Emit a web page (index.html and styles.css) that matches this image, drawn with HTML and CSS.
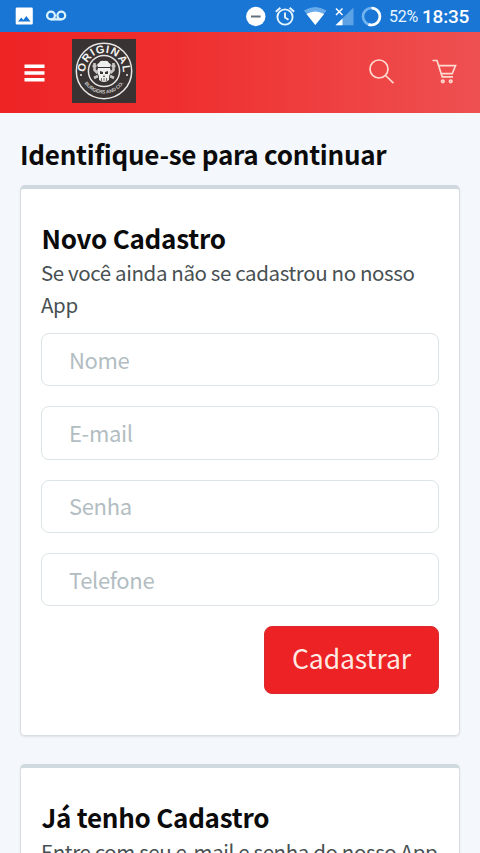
FILE: index.html
```html
<!DOCTYPE html>
<html lang="pt-BR">
<head>
<meta charset="utf-8">
<meta name="viewport" content="width=device-width, initial-scale=1">
<title>Cadastro</title>
<link rel="stylesheet" href="styles.css">
</head>
<body>
<div class="status">
  <svg class="status-left" width="70" height="32" viewBox="0 0 70 32">
    <path fill="#fff" fill-rule="evenodd" d="M17 7.500h14.500q1.300 0 1.300 1.300v14.400q0 1.300-1.300 1.300H17q-1.300 0-1.300-1.300V8.800q0-1.300 1.300-1.300zM18 21.500h12.500l-4.200-5.500-3 3.900-2-2.400z"/>
    <g fill="none" stroke="#d9f3ff" stroke-width="2.300"><circle cx="51" cy="15.500" r="3.900"/><circle cx="61.300" cy="15.500" r="3.900"/><path d="M51 19.400h10.300"/></g>
  </svg>
  <div class="status-right">
    <svg width="140" height="32" viewBox="244 0 140 32">
      <circle cx="255.800" cy="16.500" r="9.700" fill="#fff"/><path d="M251 16.500h9.600" stroke="#60717c" stroke-width="2"/>
      <g fill="none" stroke="#e6f5ff" stroke-width="1.900"><circle cx="285" cy="17" r="7.600"/><path d="M285 12.500v5l3.500 2.300M275.800 11.800l4.600-4M294.200 11.800l-4.600-4"/></g>
      <path d="M304 10.500q11-7 22.500 0L315.300 25z" fill="#68abea"/><path d="M306.500 14q8.800-5 17.600 0L315.300 25z" fill="#fff"/>
      <path d="M353.500 7.500V25.300H335.500z" fill="#5ca2e5"/><path d="M342.500 18.500v6.800h-7z" fill="#fff"/><path d="M336 8.500l6.500 6.500M342.500 8.500L336 15" stroke="#fff" stroke-width="1.500"/>
      <circle cx="371.500" cy="16.500" r="8.500" fill="none" stroke="#72b4f0" stroke-width="2.600"/><path d="M371.500 8a8.500 8.500 0 1 1-3 16.500" fill="none" stroke="#fff" stroke-width="2.600"/>
    </svg>
    <span class="battery">52%</span><span class="clock">18:35</span>
  </div>
</div>
<header class="bar">
  <svg class="menu" width="22" height="20" viewBox="0 0 22 20"><path d="M.5 3.300h20M.5 10h20M.5 16.700h20" stroke="#fff" stroke-width="3.400"/></svg>
  <svg class="logo" width="64" height="64" viewBox="0 0 64 64">
    <defs><path id="top" d="M13.500 36a18.800 18.800 0 1 1 37 0"/><path id="bottom" d="M8.500 34a23.700 23.700 0 0 0 47 0"/></defs>
    <rect width="64" height="64" fill="#393334"/>
    <g fill="none" stroke="#e8e6e4"><circle cx="32" cy="32" r="27.700" stroke-width="1.500"/><circle cx="32" cy="32" r="15.600" stroke-width="1.500"/></g>
    <text class="logo-name"><textPath href="#top" startOffset="50%" text-anchor="middle" textLength="60">ORIGINAL</textPath></text>
    <text class="logo-sub"><textPath href="#bottom" startOffset="50%" text-anchor="middle" textLength="46">BURGERS AND CO.</textPath></text>
    <g fill="#eee"><circle cx="9" cy="36" r="1"/><circle cx="55" cy="36" r="1"/>
    <path d="M26 28q-2-3 1-4 1-3 5-2 4-1 5 2 3 1 1 4z"/>
    <path fill-rule="evenodd" d="M26 29h12q2 4-1 8v4q-5 4-10 0v-4q-3-4-1-8zm2 3v3h3v-2zm8 0l-3 1v2h3zm-4 4l-1 2h2z"/></g>
    <path d="M20.500 27h4M22.500 24v7l3 3M39.500 27h4M41.500 24v7l-3 3M22 39l4-2M42 39l-4-2" stroke="#c9c7c5" stroke-width="2.600" fill="none"/>
    <path d="M29.500 39v3M32 39v3M34.500 39v3" stroke="#393334" stroke-width=".7"/>
  </svg>
  <svg class="search" width="26" height="26" viewBox="0 0 26 26" fill="none" stroke="#ffd9cf" stroke-width="1.700"><circle cx="10" cy="10" r="9"/><path d="M16.500 16.500l8 7.700"/></svg>
  <svg class="cart" width="26" height="26" viewBox="0 0 26 26" fill="none" stroke="#ffd9cf" stroke-width="1.700"><path d="M.5 1.500H5l5.200 16.300H21M6.500 6.700h17l-3.300 8H9.200"/><circle cx="10.800" cy="22.300" r="1.300"/><circle cx="18.700" cy="22.300" r="1.300"/></svg>
</header>
<main>
  <h1>Identifique-se para continuar</h1>
  <section class="card card-new">
    <h2>Novo Cadastro</h2>
    <p>Se você ainda não se cadastrou no nosso App</p>
    <form>
      <input type="text" placeholder="Nome">
      <input type="email" placeholder="E-mail">
      <input type="password" placeholder="Senha">
      <input type="tel" placeholder="Telefone">
      <button type="button">Cadastrar</button>
    </form>
  </section>
  <section class="card card-login">
    <h2>Já tenho Cadastro</h2>
    <p class="login-text">Entre com seu e-mail e senha do nosso App</p>
  </section>
</main>
</body>
</html>
```
FILE: styles.css
```css
* { box-sizing: border-box; }
body { margin: 0; height: 853px; overflow: hidden; background: #f4f7fb; font-family: "Noto Sans CJK JP", "Noto Sans", sans-serif; color: #0b0b0c; }
svg { display: block; flex: none; }
.status { height: 32px; background: #1976d5; display: flex; justify-content: space-between; color: #fff; font-family: Roboto, sans-serif; }
.status-right { display: flex; align-items: center; padding-right: 11px; }
.battery { width: 29px; font-size: 16px; letter-spacing: -.3px; margin-left: 5px; color: #e6f5ff; }
.clock { width: 47px; font-size: 19px; letter-spacing: -.2px; font-weight: 500; margin-left: 4px; }
.bar { height: 81px; display: flex; align-items: center; padding: 0 22px 3px 24px; background: linear-gradient(90deg, #ed2324 0%, #ef2e2e 35%, #ee5051 100%); }
.menu { margin-top: 3px; }
.logo { margin-left: 26px; }
.search { margin: 2px 0 0 auto; }
.cart { margin: 2px 0 0 37px; }
.logo-name { font: bold 11px "Liberation Sans", sans-serif; fill: #f5f3f1; }
.logo-sub { font: bold 5px "Liberation Sans", sans-serif; fill: #c9c7c5; }
main { padding: 22px 20px 0; }
h1, h2, p { margin: 0; }
h1, h2 { font-size: 26px; font-weight: 600; line-height: 38px; letter-spacing: -.26px; }
.card { margin-top: 29px; background: #fff; border: 1px solid #d8dde1; border-top: 4px solid #d1d9e0; border-radius: 5px; padding: 30px 20px; box-shadow: 0 1px 2px #dce2e6; height: 551px; }
.card-new { margin-top: 12px; }
.card-login { margin-top: 28px; }
h2 { text-indent: .5px; }
p { font-size: 20.500px; line-height: 32px; letter-spacing: -.38px; margin-top: -1px; color: #485052; }
.login-text { white-space: nowrap; }
form { display: flex; flex-direction: column; gap: 20px; margin-top: 13px; }
input { width: 100%; height: 53.300px; border: 1px solid #dce4e7; border-radius: 8px; padding: 0 27px 2px; background: #fff; font: 22px "Noto Sans CJK JP", sans-serif; letter-spacing: -.35px; }
input::placeholder { color: #b2bdc2; opacity: 1; }
button { align-self: flex-end; width: 175px; height: 68px; border: 1px solid #d92b2e; border-radius: 8px; padding: 0 0 5px; background: #ed2224; color: #ffe9e3; font: 26.500px "Noto Sans CJK JP", sans-serif; letter-spacing: -.1px; }
```
